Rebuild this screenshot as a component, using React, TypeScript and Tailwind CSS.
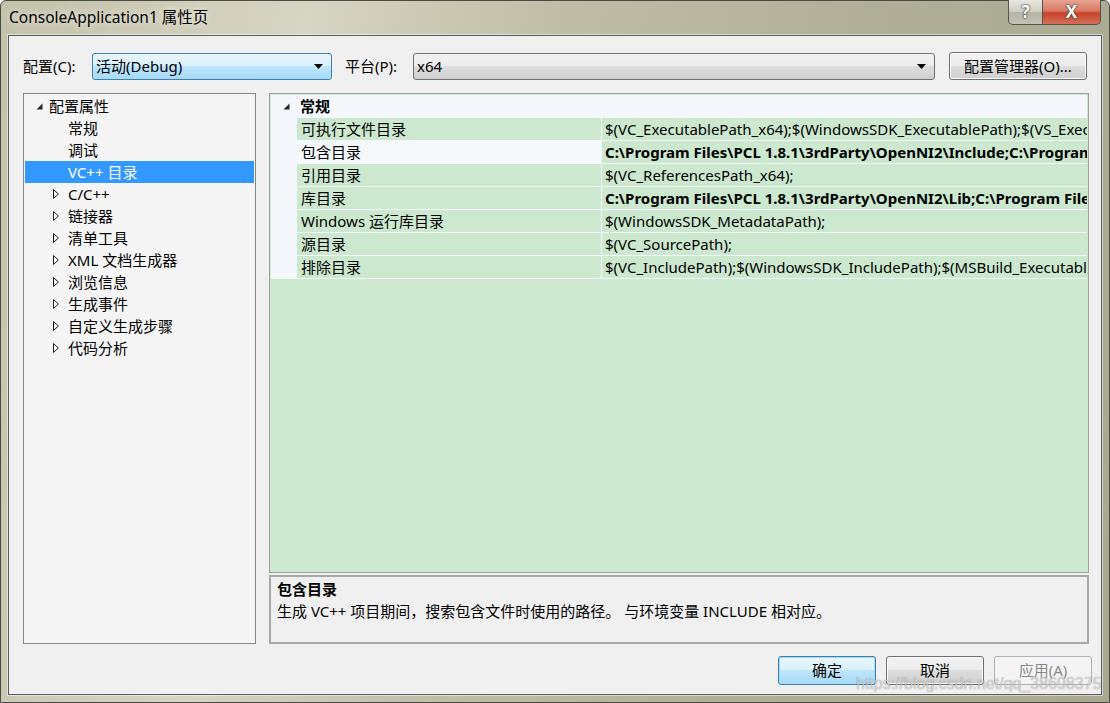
import React from "react";

type TreeRow = {
  label: string;
  kind: "root" | "leaf" | "closed";
  selected?: boolean;
};

const treeRows: TreeRow[] = [
  { label: "配置属性", kind: "root" },
  { label: "常规", kind: "leaf" },
  { label: "调试", kind: "leaf" },
  { label: "VC++ 目录", kind: "leaf", selected: true },
  { label: "C/C++", kind: "closed" },
  { label: "链接器", kind: "closed" },
  { label: "清单工具", kind: "closed" },
  { label: "XML 文档生成器", kind: "closed" },
  { label: "浏览信息", kind: "closed" },
  { label: "生成事件", kind: "closed" },
  { label: "自定义生成步骤", kind: "closed" },
  { label: "代码分析", kind: "closed" },
];

type Prop = { name: string; value: string; bold?: boolean; selected?: boolean };

const props: Prop[] = [
  {
    name: "可执行文件目录",
    value: "$(VC_ExecutablePath_x64);$(WindowsSDK_ExecutablePath);$(VS_ExecutablePath);$(MSBuild_ExecutablePath)",
  },
  {
    name: "包含目录",
    value: "C:\\Program Files\\PCL 1.8.1\\3rdParty\\OpenNI2\\Include;C:\\Program Files\\PCL 1.8.1\\include",
    bold: true,
    selected: true,
  },
  { name: "引用目录", value: "$(VC_ReferencesPath_x64);" },
  {
    name: "库目录",
    value: "C:\\Program Files\\PCL 1.8.1\\3rdParty\\OpenNI2\\Lib;C:\\Program Files\\PCL 1.8.1\\lib",
    bold: true,
  },
  { name: "Windows 运行库目录", value: "$(WindowsSDK_MetadataPath);" },
  { name: "源目录", value: "$(VC_SourcePath);" },
  {
    name: "排除目录",
    value: "$(VC_IncludePath);$(WindowsSDK_IncludePath);$(MSBuild_ExecutablePath);$(VC_LibraryPath_x64)",
  },
];

// filled "◢" glyph used by Win7 trees for an open node
function OpenGlyph() {
  return (
    <svg width="7" height="7" viewBox="0 0 7 7">
      <polygon points="6.5,0.5 6.5,6.5 0.5,6.5" fill="#262626" />
    </svg>
  );
}

// hollow "▷" glyph for a closed node
function ClosedGlyph() {
  return (
    <svg width="6" height="10" viewBox="0 0 6 10">
      <polygon points="0.5,0.5 5.3,5 0.5,9.5" fill="#ffffff" stroke="#1e1e1e" strokeWidth="1" />
    </svg>
  );
}

function DropArrow() {
  return (
    <svg width="9" height="5" viewBox="0 0 9 5">
      <polygon points="0,0 9,0 4.5,5" fill="#000" />
    </svg>
  );
}

function Combo({ value, hot, className }: { value: string; hot?: boolean; className: string }) {
  return (
    <div
      className={`flex h-[27px] items-center justify-between rounded-[3px] border pl-[3px] pr-[8px] ${className} ${
        hot
          ? "border-[#3c7fb1] bg-[linear-gradient(to_bottom,#eaf6fd_0%,#d9f0fc_50%,#bee6fd_50%,#a7d9f5_100%)]"
          : "border-[#707070] bg-[linear-gradient(to_bottom,#f2f2f2_0%,#ebebeb_50%,#dddddd_50%,#cfcfcf_100%)]"
      }`}
    >
      <span className="text-[15px] text-black">{value}</span>
      <DropArrow />
    </div>
  );
}

function WinButton({
  label,
  variant,
  className,
}: {
  label: string;
  variant: "normal" | "default" | "disabled";
  className: string;
}) {
  const look =
    variant === "default"
      ? "border-[#3c7fb1] bg-[linear-gradient(to_bottom,#eaf6fd_0%,#d9f0fc_50%,#bee6fd_50%,#a7d9f5_100%)] text-black shadow-[inset_0_0_0_1px_#a5dcf5]"
      : variant === "disabled"
        ? "border-[#adb2b5] bg-[#f4f4f4] text-[#8a8a8a]"
        : "border-[#707070] bg-[linear-gradient(to_bottom,#f2f2f2_0%,#ebebeb_50%,#dddddd_50%,#cfcfcf_100%)] text-black shadow-[inset_0_0_0_1px_#fcfcfc]";
  return (
    <div className={`flex items-center justify-center rounded-[3px] border text-[15px] ${look} ${className}`}>
      {label}
    </div>
  );
}

export default function App() {
  return (
    <div className="relative h-[703px] w-[1110px] overflow-hidden font-['Noto_Sans','Noto_Sans_CJK_SC',sans-serif] text-[15px] text-black">
      {/* Aero frame */}
      <div className="flex h-full w-full flex-col rounded-t-[6px] border border-[#4a4a44] bg-[linear-gradient(100deg,#c4c1aa_0%,#d7d5c3_25%,#c0bea7_45%,#b1af98_70%,#a9a891_100%)]">
        {/* title bar */}
        <div className="relative flex h-[34px] shrink-0 items-center pl-[8px]">
          <span className="text-[15.5px] text-black [text-shadow:0_0_8px_rgba(255,255,255,0.9)]">
            ConsoleApplication1 属性页
          </span>
          <div className="absolute right-[8px] top-[-1px] flex h-[25px]">
            <div className="flex w-[35px] items-center justify-center rounded-bl-[5px] border border-t-0 border-[#55554c] bg-[linear-gradient(to_bottom,#e7e6de_0%,#cfcdc2_50%,#b6b4a6_50%,#c4c2b4_100%)] text-[17px] font-bold text-white [text-shadow:0_0_2px_#222,0_0_1px_#222]">
              ?
            </div>
            <div className="flex w-[58px] items-center justify-center rounded-br-[5px] border border-l-0 border-t-0 border-[#55554c] bg-[linear-gradient(to_bottom,#e8a493_0%,#d97a63_45%,#c9442a_55%,#d3705a_100%)] text-[17px] font-bold text-white [text-shadow:0_0_2px_#222,0_0_1px_#222]">
              X
            </div>
          </div>
        </div>

        {/* client area */}
        <div className="mx-[7px] mb-[7px] flex flex-1 flex-col border border-[#5b5c60] bg-[#f0f0f0] shadow-[0_0_0_1px_rgba(255,255,255,0.5)]">
          {/* config row */}
          <div className="flex items-center pl-[14px] pt-[16px]">
            <span className="w-[69px] text-[15px]">配置(C):</span>
            <Combo value="活动(Debug)" hot className="w-[240px]" />
            <span className="ml-[13px] w-[68px] text-[15px]">平台(P):</span>
            <Combo value="x64" className="w-[522px]" />
            <WinButton label="配置管理器(O)..." variant="normal" className="ml-[14px] h-[28px] w-[138px]" />
          </div>

          {/* main */}
          <div className="mt-[13px] flex h-[551px] pl-[14px]">
            {/* tree */}
            <div className="flex w-[233px] flex-col border border-[#828790] bg-[#f5f5f5] p-px">
              {treeRows.map((row) => (
                <div
                  key={row.label}
                  className={`flex h-[22px] items-center ${row.selected ? "bg-[#3399ff] text-white" : ""}`}
                >
                  {row.kind === "root" && (
                    <>
                      <span className="ml-[11px] flex w-[13px] items-center">
                        <OpenGlyph />
                      </span>
                      <span>{row.label}</span>
                    </>
                  )}
                  {row.kind === "closed" && (
                    <>
                      <span className="ml-[28px] flex w-[15px] items-center">
                        <ClosedGlyph />
                      </span>
                      <span>{row.label}</span>
                    </>
                  )}
                  {row.kind === "leaf" && <span className="ml-[43px]">{row.label}</span>}
                </div>
              ))}
            </div>

            {/* property grid + description */}
            <div className="ml-[13px] flex w-[820px] flex-col">
              <div className="flex h-[480px] flex-col overflow-hidden border border-[#a0a0a0] bg-[#cce8cf] p-px">
                <div className="bg-[#f4f7fc] pb-px">
                  <div className="flex h-[22px] items-center">
                    <span className="ml-[12px] flex w-[17px] items-center">
                      <OpenGlyph />
                    </span>
                    <span className="font-bold">常规</span>
                  </div>
                  {props.map((p) => (
                    <div key={p.name} className="mt-px flex h-[22px] pl-[26px]">
                      <div
                        className={`flex w-[304px] shrink-0 items-center pl-[4px] ${
                          p.selected ? "bg-[#f6f9fc]" : "bg-[#cce8cf]"
                        }`}
                      >
                        {p.name}
                      </div>
                      <div className="ml-px flex min-w-0 flex-1 items-center overflow-hidden whitespace-nowrap bg-[#cce8cf] pl-[3px]">
                        <span className={p.bold ? "font-bold" : ""}>{p.value}</span>
                      </div>
                    </div>
                  ))}
                </div>
              </div>
              <div className="mt-[2px] flex h-[69px] flex-col border-2 border-[#a8a8a8] bg-[#f0f0f0] pl-[6px] pt-px">
                <span className="font-bold leading-[22px]">包含目录</span>
                <span className="leading-[22px]">
                  生成 VC++ 项目期间，搜索包含文件时使用的路径。 与环境变量 INCLUDE 相对应。
                </span>
              </div>
            </div>
          </div>

          {/* dialog buttons */}
          <div className="mt-[12px] flex justify-end gap-[10px] pr-[9px]">
            <WinButton label="确定" variant="default" className="h-[29px] w-[98px]" />
            <WinButton label="取消" variant="normal" className="h-[29px] w-[98px]" />
            <WinButton label="应用(A)" variant="disabled" className="h-[29px] w-[98px]" />
          </div>
        </div>
      </div>

      {/* watermark over the screenshot */}
      <div className="pointer-events-none absolute left-[856px] top-[672px] font-['Liberation_Sans',sans-serif] text-[16px] text-white/60 [text-shadow:0_0_1px_rgba(0,0,0,0.45)]">
        https://blog.csdn.net/qq_38698375
      </div>
    </div>
  );
}
